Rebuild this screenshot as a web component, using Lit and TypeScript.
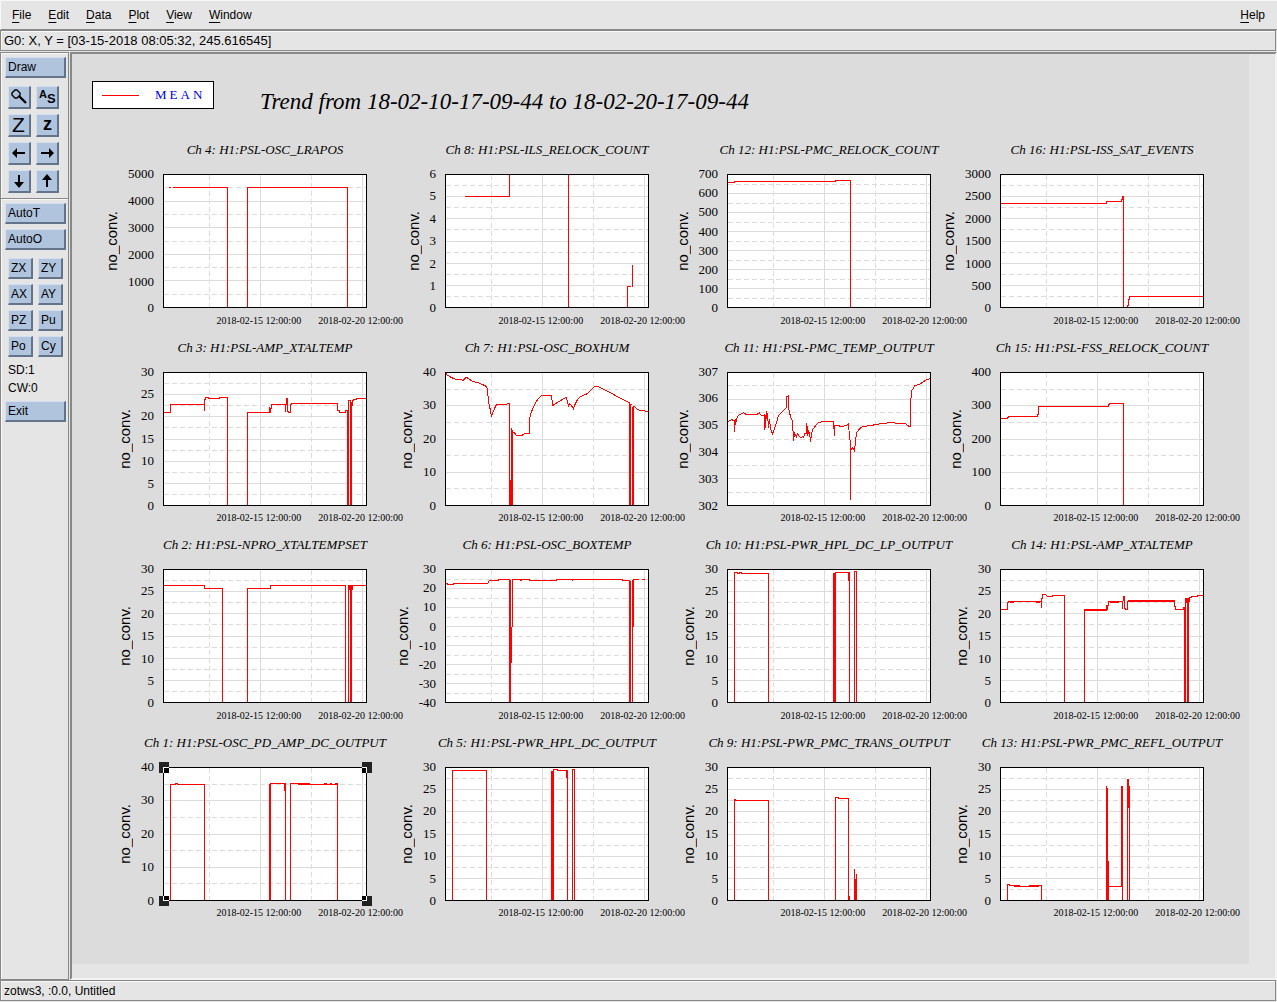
import { LitElement, html, svg, css, nothing } from "lit";
import { customElement, property } from "lit/decorators.js";

interface Channel {
  title: string;
  /** Tick labels, top to bottom. */
  ticks: string[];
  /** Trace in plot units: 203 wide, 133 tall, origin at the top left. */
  trace: string;
  selected?: boolean;
}

const range = (top: number, bottom: number, step: number): string[] => {
  const out: string[] = [];
  for (let v = top; v >= bottom; v -= step) out.push(String(v));
  return out;
};

const CHANNELS: Channel[] = [
  {
    title: "Ch 4: H1:PSL-OSC_LRAPOS",
    ticks: range(5000, 0, 1000),
    trace: "M5 13H7M9 13H64V133M84 133V13H184V133",
  },
  {
    title: "Ch 8: H1:PSL-ILS_RELOCK_COUNT",
    ticks: range(6, 0, 1),
    trace: "M19 22H64V0M123 0V133M182 133V112H185M187 90V112",
  },
  {
    title: "Ch 12: H1:PSL-PMC_RELOCK_COUNT",
    ticks: range(700, 0, 100),
    trace: "M0 8H7V7H108V6H123V133",
  },
  {
    title: "Ch 16: H1:PSL-ISS_SAT_EVENTS",
    ticks: range(3000, 0, 500),
    trace: "M0 29H106V27H121V25H122V22H123V133M127 133V131H128V125H129V122H203",
  },
  {
    title: "Ch 3: H1:PSL-AMP_XTALTEMP",
    ticks: range(30, 0, 5),
    trace:
      "M0 40H7V32H41V38V27H42V25H45V26H56V25H64V133M84 133V39V40H106V34V40H107V36H108V32H122V39V32H123V26H124V39H125V40H127V32H128V31H174V38H176V40H182V38H184V133H185V28H187V133H188V29V33H189V28H190V27H193V26H203",
  },
  {
    title: "Ch 7: H1:PSL-OSC_BOXHUM",
    ticks: range(40, 0, 10),
    trace:
      "M0 0L1 2L4 4L8 6L12 7L15 7L18 8L19 6L21 5L23 6L27 9L32 10L37 12L41 14L42 17L43 29L45 38L46 44L47 40L49 36L51 32L58 32L64 31V133H65V108H66V133V55L67 59V133V59L69 60L71 63H76L79 61H84V46L86 39L89 32L92 27L96 23H106L107 31V33L110 31L115 28L120 25H121L122 30L123 33L124 31L126 33L128 36L129 33L132 27L135 24L142 21L146 17L149 14H152L155 15L163 19L170 23L176 26L184 30V133H185V32H186M187 34V133H188V34H189L192 37L197 38L203 39",
  },
  {
    title: "Ch 11: H1:PSL-PMC_TEMP_OUTPUT",
    ticks: range(307, 302, 1),
    trace:
      "M0 50L2 48L4 47L7 48V59L8 46V52L9 46L10 44L12 42L16 40L19 42H29L32 40L33 42L35 43L37 42V57L38 42V55L39 39L40 41L41 55L42 46L43 56L45 61L47 56L49 50L51 43L55 39L59 35V24L61 23V35L63 44L65 48L66 68L67 60L69 64L70 61L73 65L75 64L76 65L77 61H79V50L80 63V53L81 61L82 60L83 69L84 61L85 57L88 53L91 50L95 49H106L107 63V53H111L114 54L121 52V50L122 65L123 69V127V78L125 75L127 78L128 69L129 60L132 56L135 54L148 52L153 51L163 50L178 51L180 53L183 54V33L184 18L186 16L187 13L192 12L199 7L203 6",
  },
  {
    title: "Ch 15: H1:PSL-FSS_RELOCK_COUNT",
    ticks: range(400, 0, 100),
    trace: "M0 46H7V45H8V44H37V42H38V34H108V32H109V31H123V133",
  },
  {
    title: "Ch 2: H1:PSL-NPRO_XTALTEMPSET",
    ticks: range(30, 0, 5),
    trace:
      "M0 16H7V15V16H41V19H59V133M84 133V19H107V16H182V133M185 133V16H187V133M188 133V15M189 15V20M185 18H189M186 16V20M187 16H203",
  },
  {
    title: "Ch 6: H1:PSL-OSC_BOXTEMP",
    ticks: range(30, -40, 10),
    trace:
      "M0 14H2V15H8V14H42L44 11H53V10H64V133H65V94V10M66 93V57M67 57V10H75V11H76V10H84V11H111V10H127V11V10H177V11H184V132H185V11M187 133V10M188 57V10H193M196 10H199",
  },
  {
    title: "Ch 10: H1:PSL-PWR_HPL_DC_LP_OUTPUT",
    ticks: range(30, 0, 5),
    trace:
      "M7 133V3H10V4H12V3H14V4H22V3V4H41V133M106 133V3M107 133V3M108 133V3H121V11M121 3H122V133M127 133V2H129V133",
  },
  {
    title: "Ch 14: H1:PSL-AMP_XTALTEMP",
    ticks: range(30, 0, 5),
    trace:
      "M0 40H7V33H8V32H41V38V29H42V25L45 25L47 27H52V26H64V133M9 33H13M35 33H39M84 133V39M84 40H106V35V40H107V36H108V32H122V39M84 41H106M109 33H118M122 31H123V27H124V39H125V40H127V32H128V31H174V37H175V40H183V38H184V133H185V29H187V133H188V28M128 32H173M186 28V33M189 32V28H191V27H197V26H203",
  },
  {
    title: "Ch 1: H1:PSL-OSC_PD_AMP_DC_OUTPUT",
    ticks: range(40, 0, 10),
    trace:
      "M7 133V17H12V16H14V17H41V133M106 133V16M107 133V16H122V133M121 16V23M127 133V16H146V17M134 17H174V133M160 16H163M166 16H168M171 16H174",
    selected: true,
  },
  {
    title: "Ch 5: H1:PSL-PWR_HPL_DC_OUTPUT",
    ticks: range(30, 0, 5),
    trace:
      "M7 133V3H41V133M106 133V3M107 133V3M108 133V2H112V3H122V133M121 3V10M127 133V2H129V133",
  },
  {
    title: "Ch 9: H1:PSL-PWR_PMC_TRANS_OUTPUT",
    ticks: range(30, 0, 5),
    trace:
      "M7 133V32H8V33H41V133M106 133V132M108 133V30H111V31H121V133M122 133V128M127 133V101M128 133V111M129 133V106",
  },
  {
    title: "Ch 13: H1:PSL-PWR_PMC_REFL_OUTPUT",
    ticks: range(30, 0, 5),
    trace:
      "M7 133V116V117H9V118H19V119M13 119H38M25 119V118M28 118H41V133M80 133V132M106 133V18M107 133V20M108 133V93M108 119H121V18M121 119H122V133M122 18V119M127 133V11M128 11V40M129 18V133M187 133V132",
  },
];

const DATES = ["2018-02-15 12:00:00", "2018-02-20 12:00:00"];

@customElement("trend-plot")
class TrendPlot extends LitElement {
  @property({ attribute: false }) channel!: Channel;

  static styles = css`
    :host {
      display: grid;
      grid-column: span 2;
      grid-template-columns: subgrid;
      grid-template-rows: 33px minmax(0, 1fr) 30px;
      min-height: 0;
      font-family: "Liberation Serif", "Times New Roman", serif;
      color: #000;
    }
    .title {
      grid-column: 2;
      display: flex;
      justify-content: center;
      min-width: 0;
      margin: 0;
      font-size: 13px;
      line-height: 18px;
      font-weight: 400;
      font-style: italic;
      white-space: nowrap;
    }
    .axis {
      grid-column: 1;
      display: flex;
      align-items: center;
      justify-content: flex-end;
      padding-right: 9px;
      gap: 8px;
    }
    .unit {
      writing-mode: vertical-rl;
      transform: rotate(180deg);
      font-family: "Liberation Sans", Arial, sans-serif;
      font-size: 15px;
      line-height: 16px;
    }
    .ticks {
      align-self: stretch;
      display: flex;
      flex-direction: column;
      justify-content: space-between;
      margin: -7px 0;
      padding: 0;
      list-style: none;
      font-size: 13px;
      line-height: 14px;
      text-align: right;
    }
    .plot {
      grid-column: 2;
      display: block;
      contain: size;
      width: 100%;
      height: 100%;
      overflow: visible;
      shape-rendering: crispEdges;
    }
    .plot * {
      vector-effect: non-scaling-stroke;
    }
    .area {
      fill: #fff;
    }
    .frame {
      fill: none;
      stroke: #000;
    }
    .grid,
    .minor {
      fill: none;
      stroke: #dcdcdc;
    }
    .minor {
      stroke-dasharray: 5 3;
    }
    .trace {
      fill: none;
      stroke: #f00;
    }
    .handle {
      fill: #222;
    }
    .inner {
      fill: #000;
    }
    .edge {
      fill: none;
      stroke: #fff;
    }
    .dates {
      grid-column: 2;
      display: flex;
      min-width: 0;
      padding-left: 22%;
      padding-top: 6px;
      font-size: 10px;
      line-height: 12px;
    }
    .date {
      flex: 0 0 64%;
      min-width: 0;
      display: flex;
      justify-content: center;
      white-space: nowrap;
    }
  `;

  private handle(x: number, y: number, sx: number, sy: number) {
    return svg`<g transform="translate(${x} ${y}) scale(${sx} ${sy})">
      <rect class="handle" x="-5" y="-5" width="10" height="10"></rect>
      <rect class="inner" x="0" y="0" width="5" height="5"></rect>
      <path class="edge" d="M0 5V0H5"></path>
    </g>`;
  }

  render() {
    const { title, ticks, trace, selected } = this.channel;
    const step = 133 / (ticks.length - 1);
    const major = ticks
      .slice(1, -1)
      .map((_, i) => `M0 ${Math.round((i + 1) * step)}H203`)
      .join("");
    const minor = ticks
      .slice(1)
      .map((_, i) => `M0 ${Math.round((i + 0.5) * step)}H203`)
      .join("");
    return html`
      <h2 class="title"><span>${title}</span></h2>
      <div class="axis">
        <span class="unit">no_conv.</span>
        <ul class="ticks">
          ${ticks.map((t) => html`<li>${t}</li>`)}
        </ul>
      </div>
      <svg class="plot" viewBox="0 0 204 134" preserveAspectRatio="none" role="img" aria-label=${title}>
        <g transform="translate(0.5 0.5)">
          <rect class="area" width="203" height="133"></rect>
          <path class="minor" d="M46 0V133M148 0V133${minor}"></path>
          <path class="grid" d="M97 0V133M199 0V133${major}"></path>
          <path class="trace" d=${trace}></path>
          <rect class="frame" width="203" height="133"></rect>
          ${selected
            ? [
                this.handle(0, 0, 1, 1),
                this.handle(203, 0, -1, 1),
                this.handle(0, 133, 1, -1),
                this.handle(203, 133, -1, -1),
              ]
            : nothing}
        </g>
      </svg>
      <div class="dates">
        ${DATES.map((d) => html`<span class="date"><span>${d}</span></span>`)}
      </div>
    `;
  }
}

const MENUS = ["File", "Edit", "Data", "Plot", "View", "Window"];

const ICONS = [
  {
    label: "Zoom",
    art: svg`<path d="M4 7L7 4H9L12 7V9L9 12H7L4 9Z" fill="none" stroke="#000" stroke-width="1.4"/><path d="M11 10L18 17" fill="none" stroke="#000" stroke-width="2.4"/>`,
  },
  {
    label: "Autoscale",
    art: svg`<text x="3" y="12" font-size="11">A</text><text x="11" y="17" font-size="13">S</text>`,
  },
  {
    label: "Zoom in",
    art: svg`<text class="thin" x="4" y="18" font-size="21">Z</text>`,
  },
  {
    label: "Zoom out",
    art: svg`<text x="7" y="16" font-size="18">z</text>`,
  },
  {
    label: "Scroll left",
    art: svg`<path d="M4 11L9 6V10H17V12H9V16Z"/>`,
  },
  {
    label: "Scroll right",
    art: svg`<path d="M18 11L13 6V10H5V12H13V16Z"/>`,
  },
  {
    label: "Scroll down",
    art: svg`<path d="M11 18L6 12H10V5H12V12H16Z"/>`,
  },
  {
    label: "Scroll up",
    art: svg`<path d="M11 4L6 10H10V17H12V10H16Z"/>`,
  },
];

@customElement("app-root")
class AppRoot extends LitElement {
  static styles = css`
    :host {
      display: flex;
      flex-direction: column;
      box-sizing: border-box;
      min-height: 100vh;
      padding-bottom: 1px;
      background: #e5e5e5;
      color: #000;
      font-family: "Liberation Sans", Arial, sans-serif;
      font-size: 12px;
    }
    button {
      margin: 0;
      font: inherit;
      color: inherit;
    }
    .menubar {
      display: flex;
      gap: 17px;
      box-sizing: border-box;
      height: 30px;
      padding: 0 12px 0 11px;
      border-top: 1px solid #f8f8f8;
      border-left: 1px solid #f8f8f8;
      border-bottom: 1px solid #888;
    }
    .menu {
      padding: 0;
      border: 0;
      background: none;
    }
    .menu:last-child {
      margin-left: auto;
    }
    .key {
      text-decoration: underline;
      text-underline-offset: 3px;
    }
    .status {
      display: flex;
      align-items: center;
      box-sizing: border-box;
      height: 21px;
      padding: 0 3px;
      border: 1px solid #888;
      margin-right: 1px;
      box-shadow: inset 1px 1px #f8f8f8;
    }
    .locator {
      font-size: 13px;
    }
    .body {
      flex: 1;
      display: flex;
      margin-top: 1px;
      min-height: 0;
    }
    .tools {
      display: flex;
      flex-direction: column;
      box-sizing: border-box;
      width: 69px;
      border: 1px solid #888;
      box-shadow: inset 1px 1px #f8f8f8;
      padding: 4px 2px 0 4px;
      margin-right: 1px;
    }
    .tool {
      box-sizing: border-box;
      display: flex;
      align-items: center;
      height: 21px;
      padding: 0 0 0 2px;
      border-style: solid;
      border-width: 1px 2px 2px 1px;
      border-color: #d3dfef #62738a #62738a #d3dfef;
      background: #b0c4de;
      text-align: left;
    }
    .icons {
      display: grid;
      grid-template-columns: 23px 23px;
      gap: 5px;
      padding: 8px 0 5px 3px;
    }
    .icon {
      height: 23px;
      padding: 0;
    }
    .art {
      display: block;
      width: 20px;
      height: 20px;
      overflow: visible;
      font-family: "Liberation Sans", Arial, sans-serif;
      font-weight: 700;
    }
    .thin {
      font-weight: 400;
    }
    .rule {
      height: 0;
      margin: 0 -2px 3px -4px;
      border: 0;
      border-top: 1px solid #888;
      border-bottom: 1px solid #f8f8f8;
    }
    .stack {
      display: grid;
      gap: 5px;
    }
    .pairs {
      display: grid;
      grid-template-columns: 25px 25px;
      gap: 5px;
      padding: 8px 0 4px 3px;
    }
    .note {
      margin: 0;
      padding-left: 3px;
      line-height: 18px;
    }
    .exit {
      margin-top: 4px;
    }
    .view {
      flex: 1;
      display: flex;
      min-width: 0;
      border: 2px solid #888;
      border-right-color: #f4f4f4;
      border-bottom-color: #f4f4f4;
      padding: 0 26px 14px 0;
    }
    .canvas {
      flex: 1;
      display: flex;
      flex-direction: column;
      min-width: 0;
      box-sizing: border-box;
      padding-bottom: 33px;
      background: #dcdcdc;
      font-family: "Liberation Serif", "Times New Roman", serif;
    }
    .head {
      display: flex;
      align-items: flex-start;
      gap: 46px;
      box-sizing: border-box;
      height: 87px;
      padding: 27px 0 0 20px;
    }
    .legend {
      flex: none;
      display: flex;
      align-items: center;
      gap: 16px;
      box-sizing: border-box;
      width: 122px;
      height: 28px;
      padding-left: 9px;
      border: 1px solid #000;
      background: #fff;
      color: #00d;
      font-size: 13px;
      letter-spacing: 3px;
    }
    .swatch {
      flex: none;
      width: 37px;
      height: 1px;
      background: #f00;
    }
    .heading {
      margin: 7px 0 0;
      font-size: 23px;
      line-height: 28px;
      font-weight: 400;
      font-style: italic;
      white-space: nowrap;
    }
    .plots {
      flex: 1;
      display: grid;
      grid-template-columns:
        91px minmax(0, 1fr) 78px minmax(0, 1fr)
        78px minmax(0, 1fr) 69px minmax(0, 1fr);
      grid-auto-rows: minmax(160px, 1fr);
      padding-right: 45px;
    }
  `;

  private menu(name: string) {
    return html`<button class="menu" type="button"><span class="key">${name[0]}</span>${name.slice(1)}</button>`;
  }

  private tool(name: string, extra = "") {
    return html`<button class="tool ${extra}" type="button">${name}</button>`;
  }

  render() {
    return html`
      <nav class="menubar">${[...MENUS, "Help"].map((m) => this.menu(m))}</nav>
      <div class="status locator">G0: X, Y = [03-15-2018 08:05:32, 245.616545]</div>
      <main class="body">
        <aside class="tools">
          ${this.tool("Draw")}
          <div class="icons">
            ${ICONS.map(
              (i) => html`<button class="tool icon" type="button" aria-label=${i.label}>
                <svg class="art" viewBox="1 1 20 20">${i.art}</svg>
              </button>`
            )}
          </div>
          <hr class="rule" />
          <div class="stack">${["AutoT", "AutoO"].map((t) => this.tool(t))}</div>
          <div class="pairs">
            ${["ZX", "ZY", "AX", "AY", "PZ", "Pu", "Po", "Cy"].map((t) => this.tool(t))}
          </div>
          <p class="note">SD:1</p>
          <p class="note">CW:0</p>
          ${this.tool("Exit", "exit")}
        </aside>
        <section class="view">
          <div class="canvas">
            <header class="head">
              <div class="legend"><span class="swatch"></span><span>MEAN</span></div>
              <h1 class="heading">Trend from 18-02-10-17-09-44 to 18-02-20-17-09-44</h1>
            </header>
            <div class="plots">
              ${CHANNELS.map((c) => html`<trend-plot .channel=${c}></trend-plot>`)}
            </div>
          </div>
        </section>
      </main>
      <footer class="status">zotws3, :0.0, Untitled</footer>
    `;
  }
}
